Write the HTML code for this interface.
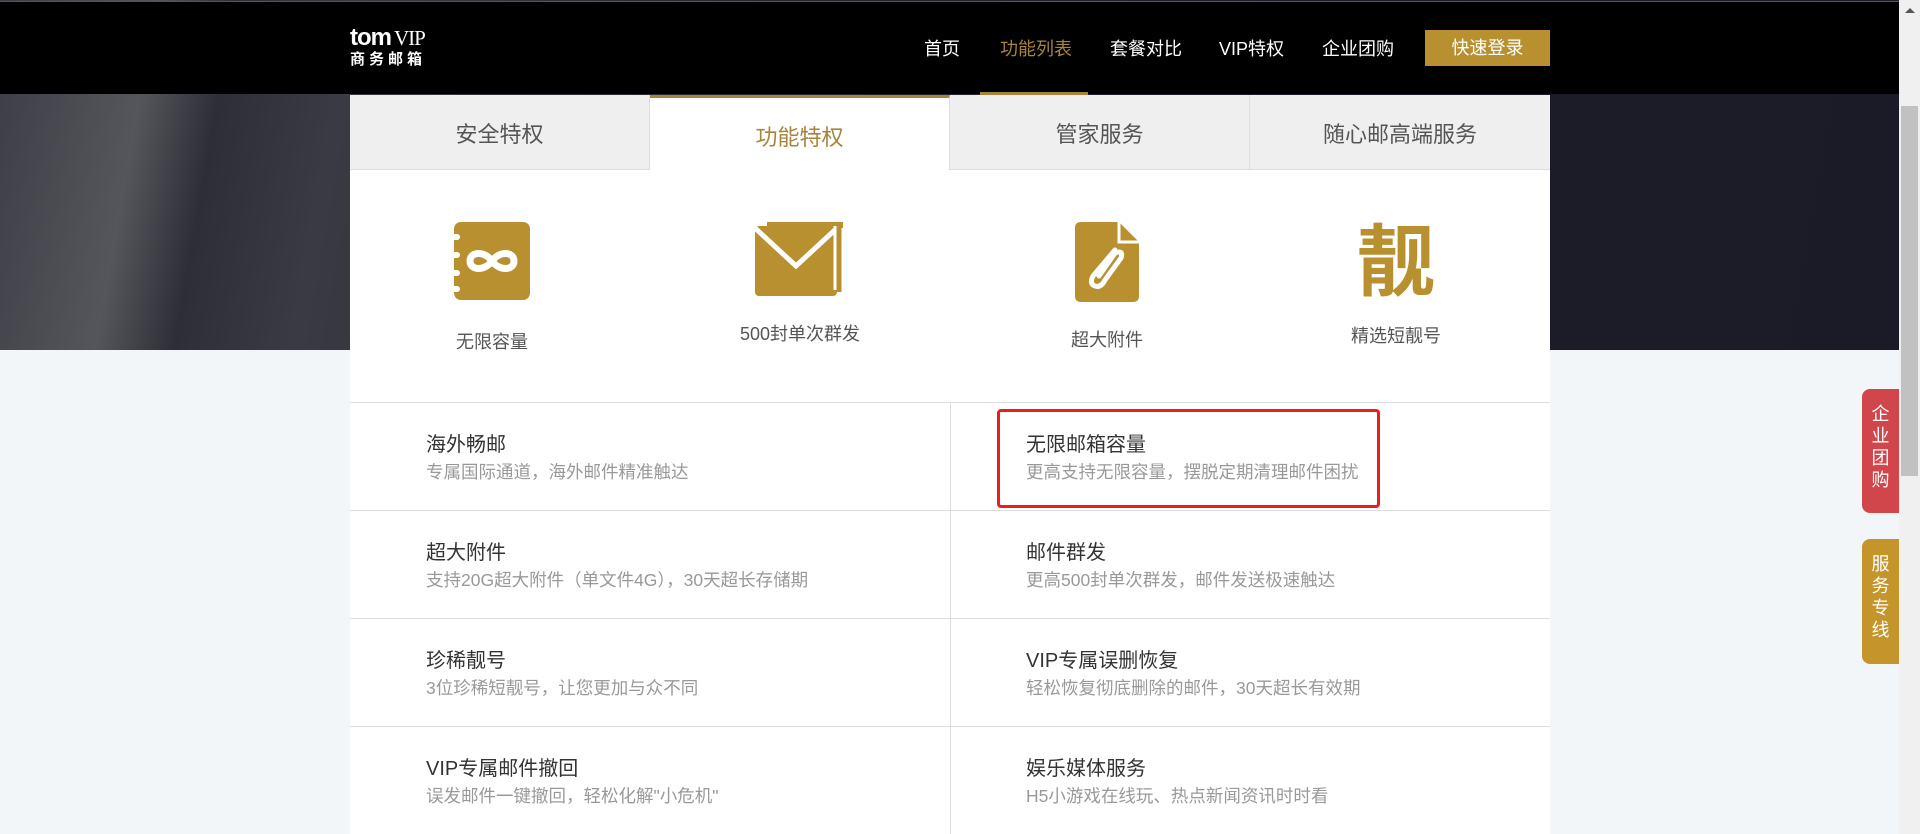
<!DOCTYPE html>
<html><head><meta charset="utf-8"><style>
*{margin:0;padding:0;box-sizing:border-box}
html{overflow:hidden;height:834px}
body{width:1920px;height:834px;overflow:hidden;background:#f3f6f9;font-family:"Liberation Sans","Noto Sans CJK SC",sans-serif;position:relative}
.hero{position:absolute;left:0;top:0;width:1899px;height:350px;background:linear-gradient(100deg,#3c3c44 0%,#55555c 8%,#2e2e36 12%,#3a3a42 18%,#26262e 40%,#1d1d29 70%,#1b1b27 100%)}
.nav{position:absolute;left:0;top:1px;width:1899px;height:93px;background:#000;border-top:1px solid #555}
.logo{position:absolute;left:350px;top:24px;color:#fff}
.logo .a{font-size:24px;font-weight:bold;letter-spacing:-1px;line-height:24px}
.logo .a span{font-family:"Liberation Serif",serif;font-weight:normal;font-size:21px;margin-left:3px}
.logo .b{font-size:15px;font-weight:bold;letter-spacing:4px;line-height:20px}
.menu a{position:absolute;top:35px;color:#fff;font-size:18px;text-decoration:none;line-height:24px}
.btn{position:absolute;left:1425px;top:28px;width:125px;height:36px;background:#b8902f;color:#fff;font-size:18px;text-align:center;line-height:36px}
.uline{position:absolute;left:980px;top:90px;width:108px;height:3px;background:#a8843a}
.box{position:absolute;left:350px;top:95px;width:1200px;height:739px;background:#fff;overflow:hidden}
.tab{position:absolute;top:0;width:300px;height:75px;background:#efefef;border-bottom:1px solid #ddd;border-right:1px solid #ddd;color:#555;font-size:22px;text-align:center;line-height:80px}
.tab.on{background:#fff;border-bottom:none;border-top:3px solid #a8843a;color:#a8843a;line-height:80px}
.ic{position:absolute;top:127px;width:300px;text-align:center}
.ic svg{display:block;margin:0 auto}
.ic div{color:#555;font-size:18px}
.grid{position:absolute;left:0;top:307px;width:1200px}
.row{height:108px;border-top:1px solid #ddd;position:relative}
.cell{position:absolute;top:0;height:107px;width:600px;padding:29px 0 0 76px}
.cell.r{left:600px;border-left:1px solid #ddd;padding-left:75px}
.t{font-size:20px;color:#333;line-height:26px}
.s{font-size:17.5px;color:#999;line-height:28px}
.redbox{position:absolute;left:997px;top:409px;width:383px;height:99px;border:3px solid #e8201a;border-radius:4px}
.side{position:absolute;left:1862px;width:37px;border-radius:8px 0 0 8px;color:#fff;font-size:18px;line-height:22px;text-align:center;padding-top:14px}
.sb{position:absolute;left:1899px;top:0;width:21px;height:834px;background:#f0f0f0}
.thumb{position:absolute;left:1901px;top:106px;width:17px;height:370px;background:#c1c1c1}
.arr{position:absolute;left:1905px;top:8px;width:0;height:0;border-left:5px solid transparent;border-right:5px solid transparent;border-bottom:5px solid #555}
</style></head><body>
<div class="hero"></div>
<div class="nav">
 <div class="logo"><div class="a">tom<span>VIP</span></div><div class="b">商务邮箱</div></div>
 <div class="menu">
  <a style="left:924px">首页</a>
  <a style="left:1000px;color:#a8843a">功能列表</a>
  <a style="left:1110px">套餐对比</a>
  <a style="left:1219px">VIP特权</a>
  <a style="left:1322px">企业团购</a>
 </div>
 <div class="btn">快速登录</div>
 <div class="uline"></div>
</div>
<div class="box">
 <div class="tab" style="left:0">安全特权</div>
 <div class="tab on" style="left:300px">功能特权</div>
 <div class="tab" style="left:600px">管家服务</div>
 <div class="tab" style="left:900px;border-right:none">随心邮高端服务</div>

 <div class="ic" style="left:-8px;top:127px"><svg width="76" height="78" viewBox="0 0 76 78"><rect x="0" y="0" width="76" height="78" rx="7" fill="#b8902f"/><g fill="#fff"><rect x="-2" y="12" width="8" height="6" rx="3"/><rect x="-2" y="30" width="8" height="6" rx="3"/><rect x="-2" y="48" width="8" height="6" rx="3"/><rect x="-2" y="64" width="8" height="6" rx="3"/></g><path d="M38 39 C30 28 16 30 16 39 C16 48 30 50 38 39 C46 28 60 30 60 39 C60 48 46 50 38 39Z" fill="none" stroke="#fff" stroke-width="7"/></svg><div style="margin-top:28px">无限容量</div></div>
 <div class="ic" style="left:300px;top:127px"><svg width="90" height="74" viewBox="0 0 90 74"><rect x="0" y="4" width="82" height="70" rx="4" fill="#b8902f"/><path d="M0 6 L41 44 L82 6" fill="none" stroke="#fff" stroke-width="5"/><rect x="12" y="0" width="76" height="6" fill="#b8902f"/><path d="M84 2 L84 70" stroke="#b8902f" stroke-width="5"/><path d="M80 4 L80 68" stroke="#fff" stroke-width="3"/></svg><div style="margin-top:24px">500封单次群发</div></div>
 <div class="ic" style="left:607px;top:127px"><svg width="64" height="80" viewBox="0 0 64 80"><path d="M6 0 H44 L64 20 V74 Q64 80 58 80 H6 Q0 80 0 74 V6 Q0 0 6 0Z" fill="#b8902f"/><path d="M44 0 V20 H64" fill="none" stroke="#fff" stroke-width="3"/><path d="M40 28 L18 54 Q14 62 20 64 Q26 66 30 58 L46 36 Q48 30 44 30 Q40 30 38 34 L24 54" fill="none" stroke="#fff" stroke-width="5" stroke-linecap="round"/></svg><div style="margin-top:24px">超大附件</div></div>
 <div class="ic" style="left:896px;top:127px"><div style="font-size:78px;line-height:80px;color:#b8902f;font-weight:bold">靓</div><div style="margin-top:20px">精选短靓号</div></div>

 <div class="grid">
  <div class="row"><div class="cell"><div class="t">海外畅邮</div><div class="s">专属国际通道，海外邮件精准触达</div></div><div class="cell r"><div class="t">无限邮箱容量</div><div class="s">更高支持无限容量，摆脱定期清理邮件困扰</div></div></div>
  <div class="row"><div class="cell"><div class="t">超大附件</div><div class="s">支持20G超大附件（单文件4G），30天超长存储期</div></div><div class="cell r"><div class="t">邮件群发</div><div class="s">更高500封单次群发，邮件发送极速触达</div></div></div>
  <div class="row"><div class="cell"><div class="t">珍稀靓号</div><div class="s">3位珍稀短靓号，让您更加与众不同</div></div><div class="cell r"><div class="t">VIP专属误删恢复</div><div class="s">轻松恢复彻底删除的邮件，30天超长有效期</div></div></div>
  <div class="row"><div class="cell"><div class="t">VIP专属邮件撤回</div><div class="s">误发邮件一键撤回，轻松化解"小危机"</div></div><div class="cell r"><div class="t">娱乐媒体服务</div><div class="s">H5小游戏在线玩、热点新闻资讯时时看</div></div></div>
 </div>
</div>
<div class="redbox"></div>
<div class="side" style="top:389px;height:124px;background:#d0464a">企<br>业<br>团<br>购</div>
<div class="side" style="top:539px;height:125px;background:#c3952a">服<br>务<br>专<br>线</div>
<div class="sb"></div><div class="thumb"></div><div class="arr"></div>
</body></html>
